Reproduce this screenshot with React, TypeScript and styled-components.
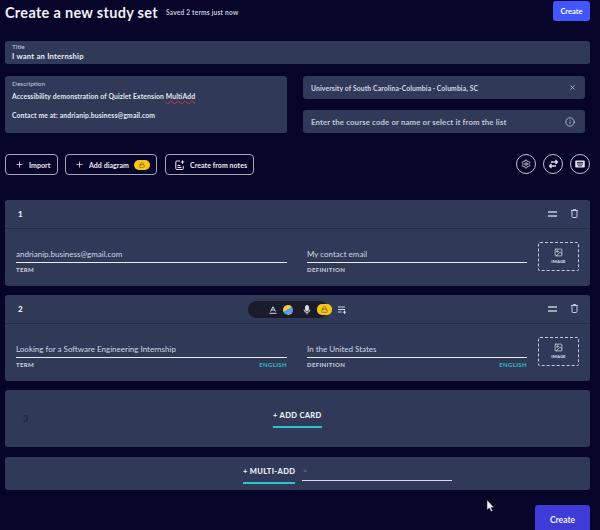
import React from "react";
import styled, { createGlobalStyle } from "styled-components";
import { Plus, X, Info, Settings, Image as ImageIcon, Lock } from "lucide-react";

const Global = createGlobalStyle`
  html, body { margin: 0; padding: 0; background: #070429; height: 530px; overflow: hidden; }
  body { font-family: Lato, "Open Sans", "Liberation Sans", sans-serif; color: #e6e8f0; }
  * { box-sizing: border-box; }
`;
const Page = styled.div`
  position: relative; width: 600px; height: 530px; overflow: hidden;
  padding: 1px 10px 0 5px; background: #070429;
`;
const Header = styled.header`
  display: flex; align-items: flex-start; height: 40px;
`;
const H1 = styled.h1`
  margin: 2px 0 0; font-size: 14.5px; line-height: 20px; font-weight: 700; color: #f0f1f6; letter-spacing: .3px;
`;
const Saved = styled.span`
  margin: 6px 0 0 8px; font-size: 6.6px; line-height: 10px; font-weight: 700; color: #c5c8d8; letter-spacing: .2px;
`;
const PrimarySmall = styled.button`
  margin-left: auto; width: 37px; height: 20px; border: none; border-radius: 3px; background: #4255ff;
  color: #fff; font: 700 7.5px Lato, sans-serif; padding: 0;
`;
const Panel = styled.div`
  background: #303a58; border-radius: 3px;
`;
const TitleBox = styled(Panel)`
  height: 23px; padding: 2px 7px; margin-bottom: 12px;
`;
const SmallLabel = styled.div`
  font-size: 6.5px; line-height: 8px; color: #c6cad9; font-weight: 400;
`;
const TitleValue = styled.div`
  font-size: 7.7px; line-height: 11px; font-weight: 700; color: #e9ebf2; letter-spacing: .2px;
`;
const TwoCol = styled.div`
  display: grid; grid-template-columns: 282px 282px; column-gap: 16px; height: 57px; margin-bottom: 21px;
`;
const DescBox = styled(Panel)`
  padding: 4px 7px;
`;
const DescText = styled.div`
  margin-top: 4px; font-size: 6.8px; line-height: 9.6px; font-weight: 700; color: #e4e6ee; letter-spacing: .12px;
`;
const Squiggle = styled.span`
  text-decoration: underline wavy #c43a3a 0.5px;
`;
const RightStack = styled.div`
  display: flex; flex-direction: column; justify-content: space-between;
`;
const SchoolBox = styled(Panel)`
  height: 23px; display: flex; align-items: center; justify-content: space-between; padding: 0 9px 0 8px;
  font-size: 6.8px; font-weight: 700; color: #d4d7e3; letter-spacing: .12px;
`;
const CourseBox = styled(Panel)`
  height: 23px; display: flex; align-items: center; justify-content: space-between; padding: 0 10px 0 8px;
  font-size: 7.8px; font-weight: 700; color: #c3c7d6; letter-spacing: .14px;
`;
const Actions = styled.div`
  display: flex; align-items: flex-start; height: 46px;
`;
const OutlineButton = styled.button<{ $w: number; $mr: number }>`
  display: flex; align-items: center; width: ${p => p.$w}px; margin-right: ${p => p.$mr}px; height: 21px; padding: 0 0 0 9px;
  gap: 5px; background: transparent; border: 1px solid #a5a8bb; border-radius: 4px; color: #e9eaf1;
  font: 700 7px Lato, sans-serif; letter-spacing: .05px;
`;
const Badge = styled.span`
  display: flex; align-items: center; justify-content: center; width: 16px; height: 10px; border-radius: 5px;
  background: #f8c51b; color: #6b5300;
`;
const Circles = styled.div`
  margin-left: auto; display: flex; gap: 7px;
`;
const Circle = styled.button`
  width: 20px; height: 20px; border-radius: 50%; border: 1px solid #c0c2d0; background: transparent;
  color: #dcdee8; padding: 0; display: flex; align-items: center; justify-content: center;
`;
const Card = styled(Panel)`
  position: relative; margin-bottom: 9.5px; height: 85.7px;
`;
const CardHead = styled.div`
  height: 28.5px; display: flex; align-items: center; justify-content: space-between; padding: 0 12px 0 13px;
  border-bottom: 1px solid #242c47; font-size: 8px; font-weight: 900; color: #eceef4;
`;
const CardTools = styled.div`
  display: flex; align-items: center; gap: 14px; color: #c7cad8;
`;
const CardBody = styled.div`
  display: grid; grid-template-columns: 271px 220px 41px; column-gap: 20px; padding: 12px 12px 0 11px;
  & > :nth-child(3) { margin-left: -9px; margin-top: 1px; }
`;
const Field = styled.div`
  display: flex; flex-direction: column; padding-top: 8.5px;
`;
const FieldText = styled.div`
  font-size: 8px; line-height: 11px; color: #d3d6e2; height: 13px;
`;
const Rule = styled.div`
  height: 1px; background: #e9eaf2;
`;
const FieldFoot = styled.div`
  display: flex; justify-content: space-between; margin-top: 3px; font-size: 6px; line-height: 8px; font-weight: 900;
  letter-spacing: .35px; color: #c4c8d6;
`;
const Lang = styled.span`
  color: #2fb3bb;
`;
const ImageBox = styled.div`
  width: 41px; height: 29px; border: 1px dashed #c9ccd9; border-radius: 2px; display: flex; flex-direction: column;
  align-items: center; justify-content: center; gap: 2px; color: #dcdee8; font-size: 4.2px; font-weight: 900; letter-spacing: .15px;
`;
const Pill = styled.div`
  position: absolute; left: 243px; top: 6px; width: 80px; height: 17px; border-radius: 9px; background: #1a1c2c;
`;
const PillIcons = styled.div`
  position: absolute; left: 262px; top: 6px; height: 17px; display: flex; align-items: center; color: #d7d9e3;
`;
const PillSlot = styled.span<{ $w: number }>`
  width: ${p => p.$w}px; display: flex; justify-content: center; align-items: center;
`;
const Globe = styled.span`
  width: 10px; height: 10px; border-radius: 50%; background: linear-gradient(150deg,#f6c945 0 45%,#5a9de0 45% 80%,#e9a7b8 80%);
`;
const PillBadge = styled(Badge)`
  width: 15px; height: 11px;
`;
const AddCard = styled(Panel)`
  position: relative; height: 56.3px; margin-bottom: 10px; display: flex; justify-content: center; padding-top: 20px;
`;
const GhostNum = styled.span`
  position: absolute; left: 18px; top: 23px; font-size: 9px; font-weight: 700; color: #1d2340;
`;
const Underlined = styled.div<{ $w: number }>`
  width: ${p => p.$w}px; height: 18px; border-bottom: 2.5px solid #2dc5c9; padding-bottom: 4px;
  font-size: 7.5px; line-height: 11px; font-weight: 900; letter-spacing: .35px; color: #eceef4; white-space: nowrap;
`;
const MultiRow = styled(Panel)`
  height: 33px; display: flex; align-items: flex-start; padding: 9px 0 0 238px; gap: 7px; margin-bottom: 15.3px;
`;
const MultiInput = styled.div`
  width: 150px; height: 15px; border-bottom: 1px solid #d9dbe6; color: #7f8497; font-size: 7px; line-height: 8px; padding-left: 1px;
`;
const BottomRow = styled.div`
  display: flex; justify-content: flex-end;
`;
const PrimaryLarge = styled.button`
  width: 55px; height: 30px; border: none; border-radius: 3px 3px 0 0; background: #3f3bd6; color: #f0f0fa;
  font: 700 8.5px Lato, sans-serif; padding: 0;
`;
const Cursor = styled.svg`
  position: absolute; left: 486px; top: 499px;
`;

const Handle = () => (
  <svg width="9" height="6" viewBox="0 0 9 6"><path d="M0 1h9M0 5h9" stroke="currentColor" strokeWidth="1.5" /></svg>
);
const Bin = () => (
  <svg width="7" height="9" viewBox="0 0 7 9" fill="none" stroke="currentColor" strokeWidth="1">
    <path d="M0 1.5h7M2.300 1.500V.5h2.400v1M1 2v5.500a1 1 0 0 0 1 1h3a1 1 0 0 0 1-1V2" />
  </svg>
);
const NotesIcon = () => (
  <svg width="10" height="10" viewBox="0 0 10 10" fill="none" stroke="currentColor" strokeWidth="1">
    <path d="M5 1H1.800a1 1 0 0 0-1 1v6.500a1 1 0 0 0 1 1h5.500a1 1 0 0 0 1-1V6M2.500 5.500h3M2.500 7.500h4M7.500.3v3.400M5.800 2h3.400" />
  </svg>
);
const SwapIcon = () => (
  <svg width="11" height="10" viewBox="0 0 11 10" fill="none" stroke="currentColor" strokeWidth="1.3">
    <path d="M3 3h6.500M7.500 1l2 2-2 2M8 7H1.500M3.500 5l-2 2 2 2" />
  </svg>
);
const KeyboardIcon = () => (
  <svg width="10" height="8" viewBox="0 0 10 8">
    <rect x=".2" y=".5" width="9.600" height="7" rx="1" fill="currentColor" />
    <path d="M2 2.500h6M2 4h6M3 5.800h4" stroke="#070429" strokeWidth=".8" />
  </svg>
);
const AccentIcon = () => (
  <svg width="8" height="8" viewBox="0 0 8 8" fill="none" stroke="currentColor" strokeWidth="1">
    <path d="M1.500 5.500 4 .8l2.500 4.700M2.500 4h3" />
    <path d="M.5 7.300h7" />
  </svg>
);
const MicIcon = () => (
  <svg width="8" height="10" viewBox="0 0 8 10" fill="none" stroke="currentColor">
    <rect x="2.500" y=".5" width="3" height="5.500" rx="1.500" fill="currentColor" />
    <path d="M1 4.500a3 3 0 0 0 6 0M4 7.500v2" strokeWidth=".9" />
  </svg>
);
const QueueIcon = () => (
  <svg width="9" height="8" viewBox="0 0 9 8" fill="none" stroke="currentColor" strokeWidth="1">
    <path d="M0 1h7M0 3.500h7M0 6h3.500M6.500 4.500v3.400M4.800 6.200h3.400" />
  </svg>
);

const Head = ({ n }: { n: number }) => (
  <CardHead>
    <span>{n}</span>
    <CardTools>
      <Handle />
      <Bin />
    </CardTools>
  </CardHead>
);
const Body = ({ term, def, lang = false }: { term: string; def: string; lang?: boolean }) => (
  <CardBody>
    <Field>
      <FieldText>{term}</FieldText>
      <Rule />
      <FieldFoot><span>TERM</span>{lang && <Lang>ENGLISH</Lang>}</FieldFoot>
    </Field>
    <Field>
      <FieldText>{def}</FieldText>
      <Rule />
      <FieldFoot><span>DEFINITION</span>{lang && <Lang>ENGLISH</Lang>}</FieldFoot>
    </Field>
    <ImageBox><ImageIcon size={9} />IMAGE</ImageBox>
  </CardBody>
);

export default function App() {
  return (
    <Page>
      <Global />
      <Header>
        <H1>Create a new study set</H1>
        <Saved>Saved 2 terms just now</Saved>
        <PrimarySmall>Create</PrimarySmall>
      </Header>
      <TitleBox>
        <SmallLabel>Title</SmallLabel>
        <TitleValue>I want an Internship</TitleValue>
      </TitleBox>
      <TwoCol>
        <DescBox>
          <SmallLabel>Description</SmallLabel>
          <DescText>
            Accessibility demonstration of Quizlet Extension <Squiggle>MultiAdd</Squiggle>
            <br /><br />
            Contact me at: andrianip.business@gmail.com
          </DescText>
        </DescBox>
        <RightStack>
          <SchoolBox>University of South Carolina-Columbia · Columbia, SC<X size={7} strokeWidth={2.5} /></SchoolBox>
          <CourseBox>Enter the course code or name or select it from the list<Info size={10} /></CourseBox>
        </RightStack>
      </TwoCol>
      <Actions>
        <OutlineButton $w={53} $mr={7}><Plus size={9} />Import</OutlineButton>
        <OutlineButton $w={92} $mr={8}><Plus size={9} />Add diagram<Badge><Lock size={6} /></Badge></OutlineButton>
        <OutlineButton $w={89} $mr={0}><NotesIcon />Create from notes</OutlineButton>
        <Circles>
          <Circle><Settings size={10} /></Circle>
          <Circle><SwapIcon /></Circle>
          <Circle><KeyboardIcon /></Circle>
        </Circles>
      </Actions>
      <Card>
        <Head n={1} />
        <Body term="andrianip.business@gmail.com" def="My contact email" />
      </Card>
      <Card>
        <Head n={2} />
        <Body term="Looking for a Software Engineering Internship" def="In the United States" lang />
        <Pill />
        <PillIcons>
          <PillSlot $w={12}><AccentIcon /></PillSlot>
          <PillSlot $w={18}><Globe /></PillSlot>
          <PillSlot $w={20}><MicIcon /></PillSlot>
          <PillSlot $w={15}><PillBadge><Lock size={7} /></PillBadge></PillSlot>
          <PillSlot $w={20}><QueueIcon /></PillSlot>
        </PillIcons>
      </Card>
      <AddCard>
        <GhostNum>3</GhostNum>
        <Underlined $w={49}>+ ADD CARD</Underlined>
      </AddCard>
      <MultiRow>
        <Underlined $w={52}>+ MULTI-ADD</Underlined>
        <MultiInput>≈</MultiInput>
      </MultiRow>
      <BottomRow><PrimaryLarge>Create</PrimaryLarge></BottomRow>
      <Cursor width="9" height="14" viewBox="0 0 9 14"><path d="M1 1v10l2.400-2 1.600 3.600 1.600-.8L5 8.400h3z" fill="#f2f2f5" stroke="#222" strokeWidth=".5" /></Cursor>
    </Page>
  );
}
